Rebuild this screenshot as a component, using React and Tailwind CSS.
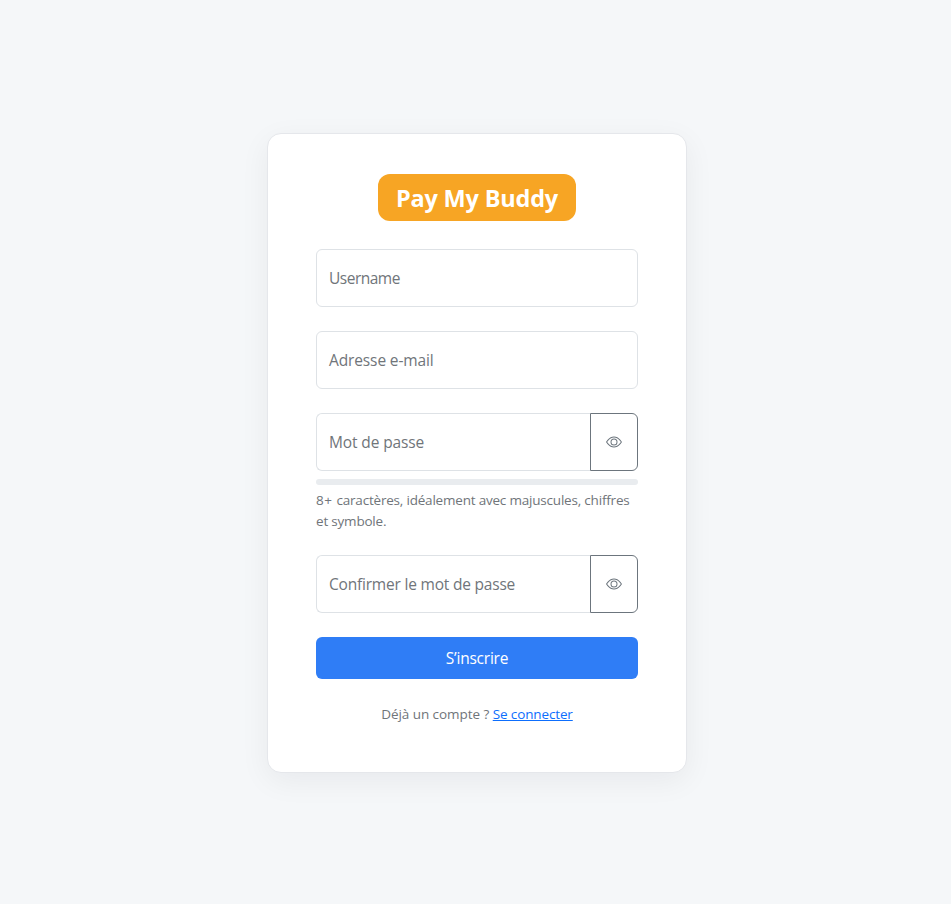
function EyeIcon() {
  return (
    <svg width="16" height="16" viewBox="0 0 16 16" fill="currentColor" aria-hidden="true">
      <path d="M16 8s-3-5.5-8-5.5S0 8 0 8s3 5.5 8 5.5S16 8 16 8M1.173 8a13 13 0 0 1 1.66-2.043C4.12 4.668 5.88 3.5 8 3.5s3.879 1.168 5.168 2.457A13 13 0 0 1 14.828 8q-.086.13-.195.288c-.335.48-.83 1.12-1.465 1.755C11.879 11.332 10.119 12.5 8 12.5s-3.879-1.168-5.168-2.457A13 13 0 0 1 1.172 8z" />
      <path d="M8 5.5a2.5 2.5 0 1 0 0 5 2.5 2.5 0 0 0 0-5M4.5 8a3.5 3.5 0 1 1 7 0 3.5 3.5 0 0 1-7 0" />
    </svg>
  );
}

function Field({ label, spacing }) {
  return (
    <label className="flex h-[58px] items-center rounded-md border border-[#dee2e6] bg-white px-3 pt-px text-[15.5px] text-[#70757a]">
      <span className={spacing}>{label}</span>
    </label>
  );
}

function PasswordField({ label, spacing }) {
  return (
    <div className="flex h-[58px]">
      <label className="flex flex-1 items-center rounded-l-md border border-r-0 border-[#dee2e6] bg-white px-3 pt-px text-[15.5px] text-[#70757a]">
        <span className={spacing}>{label}</span>
      </label>
      <button type="button" className="flex w-12 items-center justify-center rounded-r-md border border-[#6c757d] text-[#6c757d]">
        <EyeIcon />
      </button>
    </div>
  );
}

export default function App() {
  return (
    <main className="flex h-[904px] justify-center bg-[#f5f7f9] pt-[133px] pl-[3px] font-['Open_Sans','Noto_Sans',sans-serif]">
      <section className="flex h-[640px] w-[420px] flex-col rounded-[14px] border border-[#e5e7eb] bg-white px-12 pt-10 shadow-[0_8px_30px_rgba(17,24,39,0.06)]">
        <h1 className="flex h-[47px] w-[198px] items-center justify-center self-center rounded-xl bg-[#f7a524] pt-[3px] text-[23.5px] font-bold text-white">
          <span className="whitespace-nowrap tracking-[-0.2px]">Pay My Buddy</span>
        </h1>
        <form className="mt-7 flex flex-col">
          <div className="flex flex-col gap-6">
            <Field label="Username" spacing="tracking-[-0.5px]" />
            <Field label="Adresse e-mail" spacing="tracking-[-0.12px]" />
            <PasswordField label="Mot de passe" spacing="tracking-[-0.12px]" />
          </div>
          <div className="mt-2 h-1.5 rounded-md bg-[#e9ecef]" />
          <p className="mt-[5px] text-[13.5px] leading-[21px] whitespace-nowrap text-[#70757a]">
            <span className="tracking-[-0.16px]">
              <span className="tracking-[0.5px]">8+ </span>
              <span className="tracking-[-0.2px]">caractères, idéalement avec majuscules, chiffres</span>
            </span>
            <br />
            <span className="tracking-[-0.2px]">et symbole.</span>
          </p>
          <div className="mt-[23px]">
            <PasswordField label="Confirmer le mot de passe" spacing="tracking-[-0.2px]" />
          </div>
          <button type="button" className="mt-6 h-[42px] rounded-md bg-[#2f7df6] pt-px text-[15.5px] text-white">
            <span className="tracking-[-0.22px]">S’inscrire</span>
          </button>
        </form>
        <p className="mt-[25px] text-center text-[13.5px] leading-[21px] whitespace-nowrap text-[#70757a]">
          <span className="tracking-[-0.06px]">Déjà un compte ?</span>{" "}
          <a href="#" className="tracking-[-0.13px] text-[#0d6efd] underline">Se connecter</a>
        </p>
      </section>
    </main>
  );
}
